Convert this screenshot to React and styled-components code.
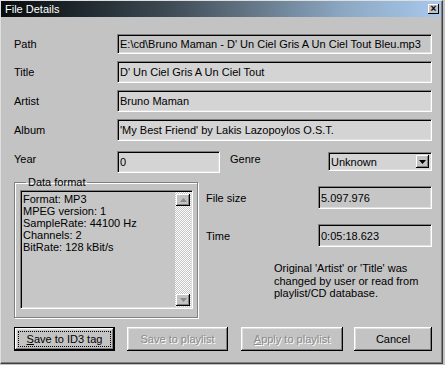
import styled, { createGlobalStyle } from "styled-components";

const GlobalStyle = createGlobalStyle`
    html, body {
        margin: 0;
        padding: 0;
        background: #c3c3c3;
    }
    * {
        box-sizing: border-box;
    }
    body {
        font-family: "Liberation Sans", Arial, sans-serif;
        font-size: 11px;
        color: #000;
    }
`;

const Window = styled.div`
    width: 443px;
    height: 364px;
    background: #c3c3c3;
    border: 1px solid;
    border-color: #dfdfdf #404040 #404040 #dfdfdf;
    box-shadow: inset -1px -1px #808080;
    display: flex;
    flex-direction: column;
`;

const TitleBar = styled.div`
    height: 16px;
    margin-right: 1px;
    display: flex;
    align-items: center;
    justify-content: space-between;
    padding: 0 2px 0 4px;
    background: linear-gradient(90deg, #080c0e 0%, #161e22 12%, #3e4a54 38%, #66798a 58%, #8ca8c4 78%, #a8c8ec 100%);
    color: #fff;
`;

const TitleText = styled.span`
    font-size: 11px;
`;

const CloseButton = styled.div`
    width: 11px;
    height: 10px;
    background: #c3c3c3;
    box-shadow: inset -1px -1px #000, inset 1px 1px #fff;
    display: flex;
    align-items: center;
    justify-content: center;
    font-size: 10px;
    font-weight: bold;
    line-height: 1;
    color: #000;
`;

const Content = styled.div`
    flex: 1;
    padding: 17px 10px 0 13px;
    display: flex;
    flex-direction: column;
`;

const Form = styled.div`
    display: grid;
    grid-template-columns: 103px 1fr;
    row-gap: 7px;
    align-items: center;
`;

const Label = styled.span`
    white-space: nowrap;
`;

const Field = styled.div`
    height: ${props => props.$h || 22}px;
    width: ${props => props.$w ? props.$w + "px" : "auto"};
    background: ${props => props.$readOnly ? "#c6c6c6" : "#d4d4d4"};
    border: 1px solid;
    border-color: #808080 #fff #fff #808080;
    box-shadow: inset 1px 1px #000, inset -1px -1px #dfdfdf;
    padding: 0 2px;
    display: flex;
    align-items: center;
    white-space: nowrap;
    overflow: hidden;
`;

const YearRow = styled.div`
    display: flex;
    align-items: flex-start;
    margin-top: 10px;
`;

const TopLabel = styled.span`
    width: ${props => props.$w}px;
    padding-top: 2px;
    white-space: nowrap;
`;

const Combo = styled(Field)`
    margin-left: auto;
    margin-top: 1px;
    padding: 0 2px 0 2px;
    justify-content: space-between;
`;

const DropButton = styled.div`
    width: 13px;
    height: 13px;
    background: #c3c3c3;
    box-shadow: inset -1px -1px #000, inset 1px 1px #fff, inset -2px -2px #808080;
    display: flex;
    align-items: center;
    justify-content: center;
`;

const Lower = styled.div`
    display: flex;
    gap: 8px;
    margin-top: 3px;
`;

const Group = styled.fieldset`
    width: 184px;
    height: 142px;
    margin: 0;
    padding: 1px 4px 8px 5px;
    border: 1px solid #808080;
    box-shadow: 1px 1px #fff, inset 1px 1px #fff;
    display: flex;
`;

const Legend = styled.legend`
    padding: 0 2px;
    margin-left: 6px;
    line-height: 13px;
`;

const ListBox = styled.div`
    flex: 1;
    display: flex;
    background: #c6c6c6;
    border: 1px solid;
    border-color: #808080 #fff #fff #808080;
    box-shadow: inset 1px 1px #000, inset -1px -1px #dfdfdf;
    padding: 1px;
`;

const ListText = styled.div`
    flex: 1;
    padding: 1px 0 0 1px;
    line-height: 12px;
`;

const ScrollBar = styled.div`
    width: 16px;
    display: flex;
    flex-direction: column;
    justify-content: space-between;
    padding: 2px 1px 1px 1px;
    background: repeating-conic-gradient(#ffffff 0 25%, #c3c3c3 0 50%) 0 0 / 2px 2px;
`;

const ScrollButton = styled.div`
    height: 12px;
    background: #c3c3c3;
    box-shadow: inset -1px -1px #000, inset 1px 1px #fff, inset -2px -2px #808080;
    display: flex;
    align-items: center;
    justify-content: center;
`;

const RightColumn = styled.div`
    flex: 1;
    display: flex;
    flex-direction: column;
    padding-top: 10px;
`;

const InfoRow = styled.div`
    display: flex;
    align-items: center;
    justify-content: space-between;
    margin-bottom: ${props => props.$mb || 0}px;
`;

const Note = styled.div`
    margin: 15px 0 0 68px;
    line-height: 12.5px;
`;

const ButtonRow = styled.div`
    display: flex;
    margin-top: 9px;
`;

const Button = styled.button`
    width: ${props => props.$w}px;
    height: 24px;
    margin-right: ${props => props.$mr || 0}px;
    padding: ${props => props.$default ? "3px" : "0"};
    background: #c3c3c3;
    border: ${props => props.$default ? "1px solid #000" : "none"};
    box-shadow: inset -1px -1px #000, inset 1px 1px #fff, inset -2px -2px #808080, inset 2px 2px #dfdfdf;
    font-family: "Liberation Sans", Arial, sans-serif;
    font-size: 11px;
    color: ${props => props.disabled ? "#8a8a8a" : "#000"};
    text-shadow: ${props => props.disabled ? "1px 1px #fff" : "none"};
    display: flex;
    align-items: stretch;
    justify-content: stretch;
`;

const ButtonLabel = styled.span`
    flex: 1;
    display: flex;
    align-items: center;
    justify-content: center;
    border: ${props => props.$focus ? "1px dotted #000" : "none"};
`;

const Arrow = ({ up, color = "#000" }) => (
    <svg width="7" height="4" viewBox="0 0 7 4">
        <path d={up ? "M3.5 0 L7 4 L0 4 Z" : "M0 0 L7 0 L3.5 4 Z"} fill={color} />
    </svg>
);

const App = () => {
    return (
        <>
            <GlobalStyle />
            <Window>
                <TitleBar>
                    <TitleText>File Details</TitleText>
                    <CloseButton>×</CloseButton>
                </TitleBar>
                <Content>
                    <Form>
                        <Label>Path</Label>
                        <Field $h={20} $readOnly>E:\cd\Bruno Maman - D' Un Ciel Gris A Un Ciel Tout Bleu.mp3</Field>
                        <Label>Title</Label>
                        <Field>D' Un Ciel Gris A Un Ciel Tout</Field>
                        <Label>Artist</Label>
                        <Field>Bruno Maman</Field>
                        <Label>Album</Label>
                        <Field>'My Best Friend' by Lakis Lazopoylos O.S.T.</Field>
                    </Form>
                    <YearRow>
                        <TopLabel $w={103}>Year</TopLabel>
                        <Field $w={103}>0</Field>
                        <TopLabel $w={60} style={{ marginLeft: 10 }}>Genre</TopLabel>
                        <Combo $w={104} $h={19}>
                            Unknown
                            <DropButton><Arrow /></DropButton>
                        </Combo>
                    </YearRow>
                    <Lower>
                        <Group>
                            <Legend>Data format</Legend>
                            <ListBox>
                                <ListText>
                                    Format: MP3<br />
                                    MPEG version: 1<br />
                                    SampleRate: 44100 Hz<br />
                                    Channels: 2<br />
                                    BitRate: 128 kBit/s
                                </ListText>
                                <ScrollBar>
                                    <ScrollButton><Arrow up color="#8a8a8a" /></ScrollButton>
                                    <ScrollButton><Arrow color="#8a8a8a" /></ScrollButton>
                                </ScrollBar>
                            </ListBox>
                        </Group>
                        <RightColumn>
                            <InfoRow $mb={15}>
                                <Label>File size</Label>
                                <Field $w={114} $h={23} $readOnly>5.097.976</Field>
                            </InfoRow>
                            <InfoRow>
                                <Label>Time</Label>
                                <Field $w={114} $h={23} $readOnly>0:05:18.623</Field>
                            </InfoRow>
                            <Note>
                                Original 'Artist' or 'Title' was<br />
                                changed by user or read from<br />
                                playlist/CD database.
                            </Note>
                        </RightColumn>
                    </Lower>
                    <ButtonRow>
                        <Button $w={101} $mr={12} $default>
                            <ButtonLabel $focus><u>S</u>ave to ID3 tag</ButtonLabel>
                        </Button>
                        <Button $w={101} $mr={13} disabled>
                            <ButtonLabel>Save to playlist</ButtonLabel>
                        </Button>
                        <Button $w={102} $mr={11} disabled>
                            <ButtonLabel><u>A</u>pply to playlist</ButtonLabel>
                        </Button>
                        <Button $w={78}>
                            <ButtonLabel>Cancel</ButtonLabel>
                        </Button>
                    </ButtonRow>
                </Content>
            </Window>
        </>
    );
};

export default App;
